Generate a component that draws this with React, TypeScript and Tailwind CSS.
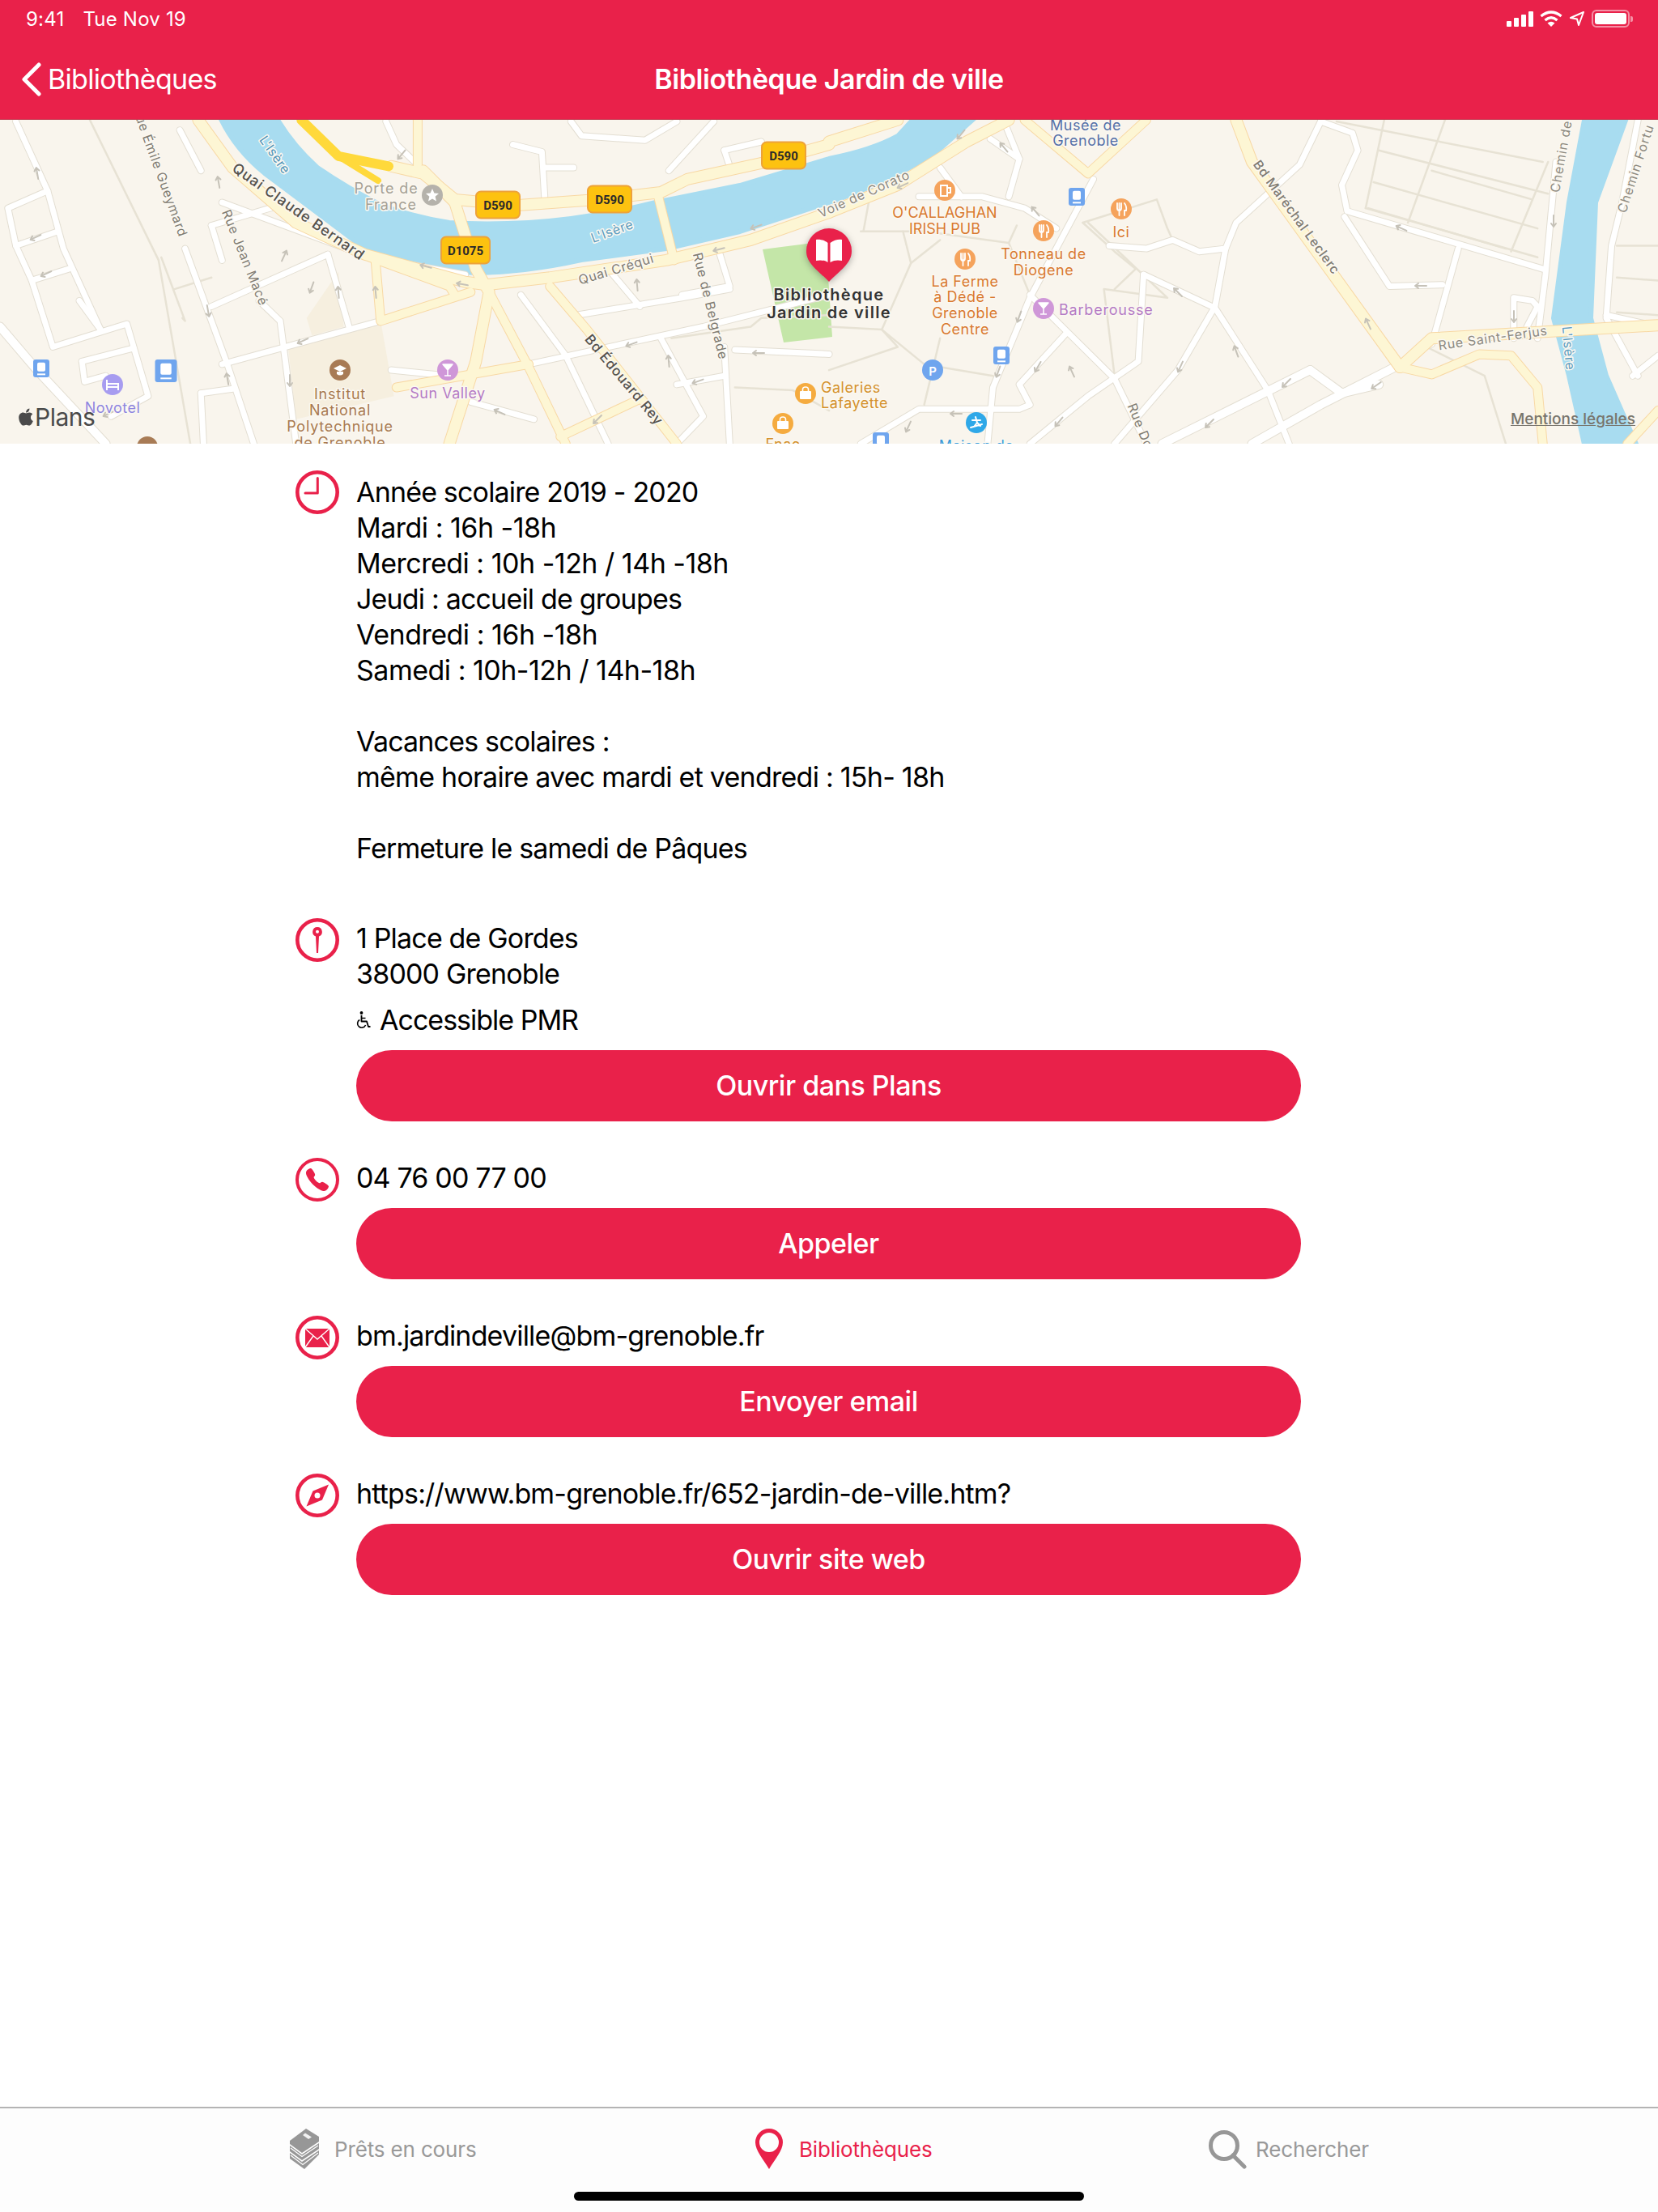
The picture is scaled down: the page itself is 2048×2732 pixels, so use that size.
import React from "react";
import { FaApple } from "react-icons/fa";
import { IoCall } from "react-icons/io5";

// the map zooms were read at 1.531 x 2.8, so points are kept in that space and converted here
const pts = (s: string, ox: number) =>
  "M" +
  s
    .split(" ")
    .map((p) => {
      const [x, y] = p.split(",").map(Number);
      return `${(x * 0.6531 + ox).toFixed(1)} ${(y * 0.3571 - 148).toFixed(1)}`;
    })
    .join(" L");
const L = (s: string) => pts(s, 0);
const R = (s: string) => pts(s, 1024);

const thinRoads = [
  L("170,415 300,900 360,1535"),
  L("305,890 350,1110 345,1100"),
  L("330,1000 400,960"),
  R("1040,520 1360,670"),
  R("1165,415 1095,770"),
  R("1020,720 1280,860"),
  R("1050,415 1015,720"),
  R("1030,630 1340,790"),
  R("1140,590 1330,690"),
  R("1360,560 1290,870"),
  R("1015,720 1340,890"),
  R("960,420 1350,560"),
  R("490,770 640,1030 520,1000 540,1300"),
  R("60,800 180,800 340,840 355,780"),
  R("65,800 75,700"),
  R("140,800 155,910 100,1140 180,1260 310,1300"),
  R("155,910 210,830"),
  R("480,770 620,690 640,790 650,830"),
  R("340,840 380,1020"),
  R("480,770 540,870 580,930 540,1000"),
  R("0,1130 100,1140 130,1200 0,1280"),
  R("210,1170 180,1400"),
  R("1130,1200 1240,1300 1280,1535"),
  R("1490,850 1568,850"),
  R("1490,960 1568,970"),
  R("1490,1080 1568,1090"),
  L("1270,1170 1420,1130 1440,1100 1568,1090"),
  L("1390,1340 1500,1350 1568,1420"),
];

const whiteRoads = [
  L("30,420 90,660 120,860 190,1140"),
  L("90,660 15,720 30,850 110,800"),
  L("30,850 60,970 130,930"),
  L("60,970 100,1200 240,1120 280,1370 210,1440"),
  L("150,1040 190,1140"),
  L("155,1250 250,1205"),
  L("155,1250 160,1320 200,1300"),
  L("340,450 380,590"),
  L("350,860 430,1260 480,1535"),
  L("400,780 420,900"),
  L("400,780 520,715"),
  L("400,1060 620,880"),
  L("620,880 660,1130"),
  L("490,1040 530,1110 560,1535"),
  L("420,1260 720,1110"),
  L("380,1360 385,1535"),
  L("380,1360 440,1345"),
  L("740,1280 850,1300"),
  L("890,1390 1010,1450"),
  L("1000,1260 1330,1130 1568,1020"),
  L("985,1020 1070,1230 1150,1535"),
  L("1090,1090 1290,1030 1380,1000"),
  L("1210,1060 1150,930"),
  L("1290,1020 1380,990 1360,870"),
  L("1250,1170 1330,1440 1280,1535"),
  L("1370,1200 1380,1535"),
  L("1280,1330 1370,1300"),
  L("1390,1210 1568,1225"),
  L("970,500 1025,525 1030,680"),
  L("1030,580 1085,580"),
  L("1265,590 1350,420"),
  L("1370,520 1440,490"),
  L("1370,520 1380,575"),
  L("1080,420 1100,470 1220,485 1280,420"),
  L("730,420 750,500 790,570"),
  L("420,700 700,890 880,950"),
  R("170,680 290,680 370,720 430,790"),
  R("210,580 250,680"),
  R("330,415 360,550 340,680"),
  R("305,480 360,550"),
  R("500,620 380,1030 310,1340 300,1535"),
  R("530,850 600,860 650,830 700,870 750,860"),
  R("750,860 730,1060 660,1280 540,1535"),
  R("595,950 730,1065 830,1350 870,1535"),
  R("595,950 585,1250 490,1370 380,1535"),
  R("380,1020 540,1310 600,1535"),
  R("450,1150 360,1330 380,1400 360,1415 170,1415 60,1535"),
  R("930,420 990,460 1000,520 970,640 980,730 1350,930"),
  R("930,420 890,570 770,770 750,860"),
  R("975,750 1060,990 1160,985"),
  R("1190,860 1140,1190"),
  R("1295,1170 1295,1030 1330,1040 1340,1060 1320,1130"),
  R("1470,1090 1568,1130"),
  R("1375,560 1355,950 1340,1170"),
  R("1500,700 1480,850 1470,1100 1530,1300"),
  R("1530,415 1500,700"),
  R("1568,1230 1520,1300"),
];

const wideRoads = [
  R("1070,1270 930,1400 800,1535"),
  R("910,1280 630,1535"),
  R("910,1280 970,1360 1040,1330"),
  L("0,1130 70,1280 200,1535"),
];

const mainRoads = [
  L("375,415 440,580 560,770 690,880 880,975 920,985 1040,960 1260,900 1420,830 1568,735"),
  R("0,735 130,640 260,490 340,415"),
  L("740,575 800,600 860,690 980,710 1130,690 1250,665 1300,620 1450,560 1568,500"),
  R("0,490 130,415"),
  L("800,590 860,700 900,930 925,1010 900,1250 850,1535"),
  R("770,415 800,560 1080,1270"),
  R("1080,1270 1140,1170 1568,1125"),
];

const yellowRoads = [
  L("790,415 790,570"),
  L("925,1010 1000,1270 1070,1535"),
  L("1040,990 1110,1140 1280,1535"),
  L("710,900 720,1110 890,1010"),
  L("700,890 850,990 860,1020"),
  L("1245,680 1275,900"),
  L("750,1340 1000,1260"),
  L("1060,1510 1210,1380"),
  R("370,415 490,600 600,415"),
  R("1080,1270 1140,1295 1230,1225 1290,1230 1340,1340 1350,1535"),
  R("1568,1420 1510,1535"),
];

// x, y, direction, read off the one-way marks in the reference
const arrows = [
  [46, 66, 80], [44, 145, -25], [57, 190, -25], [270, 77, 80], [257, 236, -100], [351, 168, 115],
  [385, 207, -70], [418, 213, 85], [464, 213, 85], [374, 273, -25], [526, 181, 15], [571, 203, 10],
  [934, 132, -20], [888, 160, -15], [787, 204, 85], [780, 277, -20], [862, 323, -20], [937, 288, 0],
  [826, 298, 85], [358, 322, -90], [281, 320, 80], [617, 361, 25], [738, 370, -45], [496, 43, -50],
  [134, 363, -25], [1187, 18, -50], [1240, 34, 50], [1279, 113, 50], [1115, 81, -25], [1731, 134, 25],
  [1690, 252, 65], [1755, 205, 0], [1919, 125, -90], [1870, 243, -90], [1455, 213, 45], [1259, 243, -70],
  [1233, 311, -70], [1282, 305, -60], [1324, 311, 65], [1527, 286, 70], [1458, 305, -65], [1589, 325, -45],
  [1494, 375, -45], [1700, 328, -35], [1181, 363, 0], [1122, 379, -65], [1308, 373, -50],
];

const Label = ({
  x, y, color = "#8e8a80", size = 18, weight = 400, rotate = 0, anchor = "middle", spacing = 0.5, children,
}: {
  x: number; y: number; color?: string; size?: number; weight?: number; rotate?: number;
  anchor?: "middle" | "start" | "end"; spacing?: number; children: React.ReactNode;
}) => (
  <text
    x={x}
    y={y}
    fill={color}
    fontSize={size}
    fontWeight={weight}
    textAnchor={anchor}
    dominantBaseline="central"
    letterSpacing={spacing}
    stroke="#fbf8f1"
    strokeWidth={3}
    strokeLinejoin="round"
    transform={rotate ? `rotate(${rotate} ${x} ${y})` : undefined}
    className="[paint-order:stroke]"
  >
    {children}
  </text>
);

const Shield = ({ x, y, w = 54, children }: { x: number; y: number; w?: number; children: string }) => (
  <g>
    <rect x={x - w / 2} y={y - 16.5} width={w} height={33} rx={6} fill="#fdc210" stroke="#eda23a" strokeWidth={2} />
    <text x={x} y={y + 1} textAnchor="middle" dominantBaseline="central" fontSize={15} fontWeight={700} fill="#2a2a2a" fontFamily="Roboto, sans-serif">
      {children}
    </text>
  </g>
);

const Tram = ({ x, y, w = 20, h = 22 }: { x: number; y: number; w?: number; h?: number }) => (
  <g transform={`translate(${x} ${y})`}>
    <rect x={-w / 2} y={-h / 2} width={w} height={h} rx={3} fill="#6fa5ee" />
    <rect x={-w / 4} y={-h / 3} width={w / 2} height={h / 2} rx={2} fill="#fff" />
    <path d={`M${-w / 4} ${h / 3} L${w / 4} ${h / 3}`} stroke="#fff" strokeWidth={2} />
  </g>
);

const Poi = ({ x, y, color, children }: { x: number; y: number; color: string; children?: React.ReactNode }) => (
  <g transform={`translate(${x} ${y})`}>
    <circle r={13} fill={color} />
    {children}
  </g>
);

const Fork = () => (
  <path d="M-5 -7 V-1 Q-5 2 -2.5 2 V8 M-2.5 -7 V2 M0 -7 V-1 Q0 2 -2.5 2 M4 -7 Q7 -3 6 2 H4 V8" fill="none" stroke="#fff" strokeWidth={1.8} strokeLinecap="round" />
);

const Glass = () => <path d="M-6 -7 H6 L0 0 Z M0 0 V7 M-4 7 H4" fill="#fff" stroke="#fff" strokeWidth={1.5} strokeLinejoin="round" />;

const Bag = () => (
  <g>
    <rect x={-7} y={-3} width={14} height={10} rx={1} fill="#fff" />
    <path d="M-3.5 -3 V-5 Q-3.5 -8 0 -8 Q3.5 -8 3.5 -5 V-3" fill="none" stroke="#fff" strokeWidth={1.6} />
  </g>
);

const MapView = () => (
  <div className="relative h-[400px] overflow-hidden bg-[#f9f5ed]">
    <svg viewBox="0 0 2048 400" className="block h-[400px] w-[2048px] font-['Inter',sans-serif]">
      <path d={L("545,1200 720,1110 745,1370 560,1450") + "Z"} fill="#f6efdf" />
      <path d={L("580,1100 640,940 650,1130 590,1160") + "Z"} fill="#f6efdf" />
      <path d="M942 160 L1020 150 L1028 268 L968 275 Z" fill="#c4e6a8" />
      <g fill="#a8dcf0" stroke="#a8dcf0" strokeWidth={6} strokeLinejoin="round">
        <path d="M271 -5 Q290 36 327 66 L451 159 Q520 186 588 189 Q650 188 718 173 L823 159 L914 138 L1024 102 Q1089 81 1155 41 L1207 -5 L1132 -5 L1109 20 Q1076 38 1024 48 L914 81 L810 102 Q730 122 653 127 Q600 130 555 127 Q510 120 470 105 Q430 85 392 59 Q360 30 340 -5 Z" />
        <path d="M1958 -5 L1938 102 L1919 245 L1938 316 L1958 405 L2023 405 L1984 316 L1965 245 L1971 102 L2010 -5 Z" />
      </g>

      <g fill="none" strokeLinejoin="round" strokeLinecap="round">
        {thinRoads.map((d) => <path key={d} d={d} stroke="#e7e2d4" strokeWidth={2.5} />)}
        {whiteRoads.map((d) => <path key={d} d={d} stroke="#e3ded2" strokeWidth={9} />)}
        {wideRoads.map((d) => <path key={d} d={d} stroke="#e3ded2" strokeWidth={12} />)}
        {whiteRoads.map((d) => <path key={d} d={d} stroke="#ffffff" strokeWidth={7} />)}
        {wideRoads.map((d) => <path key={d} d={d} stroke="#ffffff" strokeWidth={10} />)}
        {yellowRoads.map((d) => <path key={d} d={d} stroke="#f8d8a4" strokeWidth={12} />)}
        {mainRoads.map((d) => <path key={d} d={d} stroke="#f8d8a4" strokeWidth={15} />)}
        {yellowRoads.map((d) => <path key={d} d={d} stroke="#fdf6d4" strokeWidth={10} />)}
        {mainRoads.map((d) => <path key={d} d={d} stroke="#fdf6d4" strokeWidth={13} />)}
        <path d={L("570,415 640,540 735,575")} stroke="#ffd93b" strokeWidth={12} />
        <path d={L("640,540 715,625")} stroke="#ffd93b" strokeWidth={8} />
      </g>

      <g fill="none" stroke="#c6c2b8" strokeWidth={2} strokeLinecap="round">
        {arrows.map(([x, y, r]) => (
          <path key={`${x}-${y}`} d="M-7 0 H7 M-7 0 L-3 -3 M-7 0 L-3 3" transform={`translate(${x} ${y}) rotate(${r})`} />
        ))}
      </g>

      <Label x={340} y={43} color="#4d93b8" rotate={55} size={16}>L'Isère</Label>
      <Label x={369} y={113} color="#55524c" rotate={35} weight={500} spacing={0.9}>Quai Claude Bernard</Label>
      <Label x={198} y={64} color="#7f7b72" rotate={70} size={16} spacing={0.7}>Rue Émile Gueymard</Label>
      <Label x={303} y={170} color="#7f7b72" rotate={68} size={16} spacing={0.7}>Rue Jean Macé</Label>
      <Label x={477} y={84} color="#a5a095" size={18} spacing={0.9}>Porte de</Label>
      <Label x={483} y={104} color="#a5a095" size={18} spacing={0.9}>France</Label>
      <Poi x={534} y={93} color="#b5b2ab">
        <path d="M0 -8 L2.4 -2.6 L8 -2 L3.6 1.8 L5 7.5 L0 4.5 L-5 7.5 L-3.6 1.8 L-8 -2 L-2.4 -2.6 Z" fill="#fff" />
      </Poi>
      <Shield x={615} y={105}>D590</Shield>
      <Shield x={753} y={98}>D590</Shield>
      <Shield x={968} y={44}>D590</Shield>
      <Shield x={575} y={161} w={60}>D1075</Shield>
      <Label x={756} y={137} color="#5b9cc0" rotate={-20} size={16} spacing={0.7}>L'Isère</Label>
      <Label x={761} y={184} color="#7f7b72" rotate={-17} size={16} spacing={0.7}>Quai Créqui</Label>
      <Label x={878} y={230} color="#7f7b72" rotate={76} size={16} spacing={0.7}>Rue de Belgrade</Label>
      <Label x={771} y={321} color="#55524c" rotate={50} size={17} weight={500} spacing={0.8}>Bd Édouard Rey</Label>
      <Label x={1067} y={91} color="#8e8a80" rotate={-24} size={16} spacing={0.7}>Voie de Corato</Label>

      <Poi x={420} y={309} color="#a87b55">
        <path d="M-8 -2 L0 -6 L8 -2 L0 2 Z M-4 2 V5 Q0 8 4 5 V2" fill="#fff" />
      </Poi>
      <Label x={420} y={338} color="#a8794f" spacing={0.8}>Institut</Label>
      <Label x={420} y={358} color="#a8794f" spacing={0.8}>National</Label>
      <Label x={420} y={378} color="#a8794f" spacing={0.8}>Polytechnique</Label>
      <Label x={420} y={398} color="#a8794f" spacing={0.8}>de Grenoble</Label>
      <Poi x={182} y={404} color="#a87b55" />
      <Poi x={553} y={309} color="#cf97d8"><Glass /></Poi>
      <Label x={553} y={337} color="#b57bc5">Sun Valley</Label>
      <Poi x={139} y={327} color="#a79cf0">
        <path d="M-7 -6 V7 M-7 3 H7 V7 M-7 -1 H7 V3" fill="none" stroke="#fff" strokeWidth={2} />
      </Poi>
      <Label x={139} y={355} color="#8e86e0">Novotel</Label>
      <Tram x={51} y={307} />
      <Tram x={205} y={310} w={27} h={28} />

      <Poi x={995} y={338} color="#f5ab3f"><Bag /></Poi>
      <Label x={1014} y={330} color="#d4912c" anchor="start">Galeries</Label>
      <Label x={1014} y={349} color="#d4912c" anchor="start">Lafayette</Label>
      <Poi x={967} y={375} color="#f5ab3f"><Bag /></Poi>
      <Label x={967} y={400} color="#d4912c">Fnac</Label>

      <Label x={1341} y={6} color="#5570a8">Musée de</Label>
      <Label x={1341} y={25} color="#5570a8">Grenoble</Label>
      <Poi x={1167} y={87} color="#f5a35c">
        <path d="M-5 -6 H3 V7 H-5 Z M3 -3 H7 V3 H3" fill="none" stroke="#fff" strokeWidth={2} />
      </Poi>
      <Label x={1167} y={114} color="#d9792f" spacing={0}>O'CALLAGHAN</Label>
      <Label x={1167} y={134} color="#d9792f" spacing={0}>IRISH PUB</Label>
      <Tram x={1330} y={95} />
      <Poi x={1385} y={110} color="#f5a35c"><Fork /></Poi>
      <Label x={1385} y={138} color="#d9792f">Ici</Label>
      <Poi x={1289} y={137} color="#f5a35c"><Fork /></Poi>
      <Label x={1289} y={165} color="#d9792f">Tonneau de</Label>
      <Label x={1289} y={185} color="#d9792f">Diogene</Label>
      <Poi x={1192} y={172} color="#f5a35c"><Fork /></Poi>
      <Label x={1192} y={199} color="#d9792f">La Ferme</Label>
      <Label x={1192} y={218} color="#d9792f">à Dédé -</Label>
      <Label x={1192} y={238} color="#d9792f">Grenoble</Label>
      <Label x={1192} y={258} color="#d9792f">Centre</Label>
      <Poi x={1289} y={233} color="#cf97d8"><Glass /></Poi>
      <Label x={1308} y={234} color="#b57bc5" anchor="start" spacing={0.8}>Barberousse</Label>
      <Tram x={1237} y={291} />
      <Poi x={1152} y={309} color="#6fa5ee">
        <text x={0} y={1} textAnchor="middle" dominantBaseline="central" fontSize={15} fontWeight={600} fill="#fff">P</text>
      </Poi>
      <Poi x={1206} y={374} color="#2fa8e8">
        <path d="M-7 6 L7 2 M-1 -7 L1 0 L-3 5 M1 0 L5 4 M-5 -3 L5 -3" fill="none" stroke="#fff" strokeWidth={2} strokeLinecap="round" />
      </Poi>
      <Tram x={1088} y={397} />
      <Label x={1206} y={402} color="#3a9bd8">Maison de</Label>
      <Label x={1409} y={378} color="#7f7b72" rotate={68} size={16} spacing={0.7}>Rue Do</Label>
      <Label x={1602} y={120} color="#7f7b72" rotate={54} size={16} weight={500} spacing={0.7}>Bd Maréchal Leclerc</Label>
      <Label x={1844} y={269} color="#8e8a80" rotate={-8} size={16} spacing={0.7}>Rue Saint-Ferjus</Label>
      <Label x={1938} y={282} color="#5b9cc0" rotate={85} size={16} spacing={0.7}>L'Isère</Label>
      <Label x={1928} y={45} color="#8e8a80" rotate={-80} size={16} spacing={1}>Chemin de</Label>
      <Label x={2020} y={60} color="#8e8a80" rotate={-72} size={16} spacing={1}>Chemin Fortu</Label>

      <g>
        <path
          d="M1024 134 A28 28 0 0 1 1052 162 C1052 178 1037 186 1024 200 C1011 186 996 178 996 162 A28 28 0 0 1 1024 134 Z"
          fill="#e9214a"
          className="drop-shadow-[0_2px_4px_rgba(0,0,0,0.3)]"
        />
        <path
          d="M1022.5 152 C1018 148 1011 147 1008 148 V174 C1012 173 1018 173 1022.5 176 Z M1025.5 152 C1030 148 1037 147 1040 148 V174 C1036 173 1030 173 1025.5 176 Z"
          fill="#fff"
        />
      </g>
      <Label x={1024} y={216} color="#333333" size={20} weight={600} spacing={1.3}>Bibliothèque</Label>
      <Label x={1024} y={238} color="#333333" size={20} weight={600} spacing={1.3}>Jardin de ville</Label>
    </svg>
    <div className="absolute bottom-[16px] left-[21px] flex items-center text-[#4a4a4a]">
      <FaApple className="h-[24px] w-[22px]" />
      <span className="text-[30px] leading-[34px] tracking-[-0.5px]">Plans</span>
    </div>
    <span className="absolute bottom-[19px] right-[28px] text-[19px] leading-[22px] font-medium text-[#77746c] underline">Mentions légales</span>
  </div>
);

const Clock = () => (
  <svg viewBox="0 0 54 54" className="h-[54px] w-[54px] shrink-0" fill="none" stroke="#e9214a">
    <circle cx={27} cy={27} r={24.7} strokeWidth={4.6} />
    <path d="M27.3 9.5 V28 H12" strokeWidth={3} strokeLinecap="round" strokeLinejoin="round" />
  </svg>
);

const Pin = () => (
  <svg viewBox="0 0 54 54" className="h-[54px] w-[54px] shrink-0">
    <circle cx={27} cy={27} r={24.7} fill="none" stroke="#e9214a" strokeWidth={4.6} />
    <path d="M27 11 A6 6 0 0 1 29 22.6 L28 43 H26 L25 22.6 A6 6 0 0 1 27 11 Z" fill="#e9214a" />
    <circle cx={27} cy={16.8} r={2} fill="#fff" />
  </svg>
);

const Phone = () => (
  <div className="flex h-[54px] w-[54px] shrink-0 items-center justify-center rounded-full border-[4.6px] border-[#e9214a]">
    <IoCall className="h-[32px] w-[32px] text-[#e9214a]" />
  </div>
);

const Mail = () => (
  <svg viewBox="0 0 54 54" className="h-[54px] w-[54px] shrink-0">
    <circle cx={27} cy={27} r={24.7} fill="none" stroke="#e9214a" strokeWidth={4.6} />
    <rect x={12} y={16} width={30} height={23} fill="#e9214a" />
    <path d="M12 16 L27 29 L42 16 M12 39 L22 25 M42 39 L32 25" fill="none" stroke="#fff" strokeWidth={1.4} />
  </svg>
);

const Compass = () => (
  <svg viewBox="0 0 54 54" className="h-[54px] w-[54px] shrink-0">
    <circle cx={27} cy={27} r={24.7} fill="none" stroke="#e9214a" strokeWidth={4.6} />
    <path d="M41 13.5 L33 32.5 L13.5 40.5 L21.5 21.5 Z" fill="#e9214a" />
    <circle cx={27} cy={27} r={3.5} fill="#fff" />
  </svg>
);

const Wheelchair = () => (
  <svg viewBox="0 0 18 22" className="h-[22px] w-[18px] shrink-0" fill="none" stroke="#000">
    <circle cx={6.5} cy={2} r={1.9} fill="#000" stroke="none" />
    <path d="M6.5 5 V12.5 H13 L15 19 H17.5" strokeWidth={1.8} strokeLinejoin="round" />
    <path d="M6.5 8.5 H11.5" strokeWidth={1.5} />
    <path d="M4.2 10.5 A5.2 5.2 0 1 0 11.6 17" strokeWidth={1.6} />
  </svg>
);

const ActionButton = ({ children }: { children: string }) => (
  <button className="mt-[15px] flex h-[88px] w-full items-center justify-center rounded-full bg-[#e9214a] text-[34px] font-medium tracking-[-0.5px] text-white">
    {children}
  </button>
);

const Books = () => (
  <svg viewBox="0 0 36 50" className="h-[50px] w-[36px] shrink-0">
    <path d="M20 0 L36 10 V16 L15 30 L0 19 V15 Z" fill="#979797" />
    <path d="M19 5.5 L27 10.5 L23 13 L16 8 Z" fill="#f2f2f2" />
    <path d="M0 21 L15 32 L36 18 V25 L15 39 L0 28 Z" fill="#979797" />
    <path d="M1 24 L15 34.5 L35 21" fill="none" stroke="#fff" strokeWidth={1.2} />
    <path d="M0 30 L15 41 L36 27 V32 L18 50 L0 37 Z" fill="#979797" />
    <path d="M1 33 L16 44.5 L35 30" fill="none" stroke="#fff" strokeWidth={1.2} />
  </svg>
);

const TabPin = () => (
  <svg viewBox="0 0 34 50" className="h-[50px] w-[34px] shrink-0">
    <path
      fillRule="evenodd"
      d="M17 0 A17 17 0 0 1 34 17 C34 27 24 38 17 50 C10 38 0 27 0 17 A17 17 0 0 1 17 0 Z M17 5 A12 12 0 1 0 17 29 A12 12 0 1 0 17 5 Z"
      fill="#e9214a"
    />
  </svg>
);

const Search = () => (
  <svg viewBox="0 0 48 50" className="h-[50px] w-[48px] shrink-0" fill="none" stroke="#979797">
    <circle cx={20} cy={21} r={16.5} strokeWidth={5} />
    <path d="M31 33 L45 47" strokeWidth={5} strokeLinecap="round" />
  </svg>
);

export default function App() {
  return (
    <div className="flex h-[2732px] w-[2048px] flex-col bg-white font-['Inter',sans-serif] text-black">
      <header className="h-[148px] shrink-0 border-b border-[#c4394f] bg-[#e9214a] text-white">
        <div className="flex h-[46px] items-center justify-between pr-[31px] pl-[32px]">
          <div className="flex gap-[23px] pt-[2px] text-[24px] leading-[46px] tracking-[0.2px]">
            <span>9:41</span>
            <span>Tue Nov 19</span>
          </div>
          <div className="flex items-center gap-[8px]">
            <svg viewBox="0 0 33 19" className="h-[19px] w-[33px]" fill="#fff">
              <rect x={0} y={12} width={6} height={7} rx={1} />
              <rect x={9} y={8} width={6} height={11} rx={1} />
              <rect x={18} y={4} width={6} height={15} rx={1} />
              <rect x={27} y={0} width={6} height={19} rx={1} />
            </svg>
            <svg viewBox="0 0 28 20" className="h-[20px] w-[28px]" fill="none" stroke="#fff" strokeWidth={3.4}>
              <path d="M1.5 7 Q14 -3 26.5 7" />
              <path d="M6.5 12 Q14 5.5 21.5 12" />
              <path d="M14 20 L9.5 15.5 Q14 12 18.5 15.5 Z" fill="#fff" stroke="none" />
            </svg>
            <svg viewBox="0 0 18 18" className="ml-[1px] h-[18px] w-[18px]" fill="none" stroke="#fff" strokeWidth={2} strokeLinejoin="round">
              <path d="M17 1 L1 8 L9 9.5 L11 17 Z" />
            </svg>
            <div className="ml-[1px] flex items-center gap-[1px]">
              <div className="h-[22px] w-[47px] rounded-[6px] border-2 border-white/50 p-[2px]">
                <div className="h-full w-full rounded-[3px] bg-white" />
              </div>
              <div className="h-[7px] w-[3px] rounded-r-[2px] bg-white/50" />
            </div>
          </div>
        </div>
        <div className="grid h-[101px] grid-cols-[1fr_auto_1fr] items-start pt-[30px]">
          <div className="flex items-center gap-[8px] pl-[26px]">
            <svg viewBox="0 0 25 42" className="h-[42px] w-[25px]" fill="none" stroke="#fff" strokeWidth={5} strokeLinecap="round" strokeLinejoin="round">
              <path d="M22 3 L4 21 L22 39" />
            </svg>
            <span className="text-[34px] leading-[44px] tracking-[-0.7px]">Bibliothèques</span>
          </div>
          <h1 className="text-[34px] leading-[44px] font-semibold tracking-[-0.4px]">Bibliothèque Jardin de ville</h1>
          <div />
        </div>
      </header>

      <MapView />

      <main className="flex min-h-0 flex-1 flex-col pt-[33px] pr-[441px] pl-[365px] text-[34px] leading-[44px] tracking-[-0.83px]">
        <section className="flex gap-[21px]">
          <Clock />
          <div className="flex-1 pt-[5px]">
            <p>Année scolaire 2019 - 2020</p>
            <p className="tracking-[-0.5px]">Mardi : 16h -18h</p>
            <p className="tracking-[-0.5px]">Mercredi : 10h -12h / 14h -18h</p>
            <p>Jeudi : accueil de groupes</p>
            <p className="tracking-[-0.5px]">Vendredi : 16h -18h</p>
            <p className="tracking-[-0.5px]">Samedi : 10h-12h / 14h-18h</p>
            <p className="mt-[44px]">Vacances scolaires :</p>
            <p className="tracking-[-0.75px]">même horaire avec mardi et vendredi : 15h- 18h</p>
            <p className="mt-[44px]">Fermeture le samedi de Pâques</p>
          </div>
        </section>

        <section className="mt-[64px] flex gap-[21px]">
          <Pin />
          <div className="flex-1 pt-[3px]">
            <p>1 Place de Gordes</p>
            <p>38000 Grenoble</p>
            <p className="mt-[13px] flex items-center gap-[11px]">
              <Wheelchair />
              <span className="tracking-[-1px]">Accessible PMR</span>
            </p>
            <ActionButton>Ouvrir dans Plans</ActionButton>
          </div>
        </section>

        <section className="mt-[45px] flex gap-[21px]">
          <Phone />
          <div className="flex-1 pt-[3px]">
            <p>04 76 00 77 00</p>
            <ActionButton>Appeler</ActionButton>
          </div>
        </section>

        <section className="mt-[45px] flex gap-[21px]">
          <Mail />
          <div className="flex-1 pt-[3px]">
            <p>bm.jardindeville@bm-grenoble.fr</p>
            <ActionButton>Envoyer email</ActionButton>
          </div>
        </section>

        <section className="mt-[45px] flex gap-[21px]">
          <Compass />
          <div className="flex-1 pt-[3px]">
            <p>https://www.bm-grenoble.fr/652-jardin-de-ville.htm?</p>
            <ActionButton>Ouvrir site web</ActionButton>
          </div>
        </section>
      </main>

      <footer className="flex h-[130px] shrink-0 flex-col border-t-2 border-[#b4b4b4] bg-[#fdfdfd] pt-[25px]">
        <nav className="flex h-[50px] items-center pl-[358px] text-[26px] tracking-[-0.15px] whitespace-nowrap text-[#999999]">
          <div className="flex w-[228px] items-center gap-[19px]">
            <Books />
            <span>Prêts en cours</span>
          </div>
          <div className="ml-[347px] flex w-[218px] items-center gap-[20px] text-[#e9214a]">
            <TabPin />
            <span>Bibliothèques</span>
          </div>
          <div className="ml-[341px] flex items-center gap-[11px]">
            <Search />
            <span>Rechercher</span>
          </div>
        </nav>
        <div className="mx-auto mt-[28px] h-[11px] w-[630px] rounded-full bg-black" />
      </footer>
    </div>
  );
}
